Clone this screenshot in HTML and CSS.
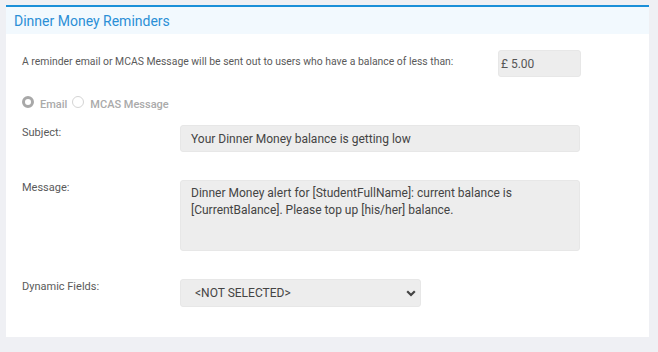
FILE: index.html
```html
<!DOCTYPE html>
<html>
<head>
<meta charset="utf-8">
<link rel="stylesheet" href="styles.css">
</head>
<body>
<div class="panel">
  <div class="panel-head">Dinner Money Reminders</div>
  <div class="panel-body">
    <div class="row-balance">
      <span class="text">A reminder email or MCAS Message will be sent out to users who have a balance of less than:</span>
      <div class="balance">£ 5.00</div>
    </div>
    <div class="radios">
      <span class="radio checked"></span><span class="radio-label">Email</span>
      <span class="radio"></span><span class="radio-label">MCAS Message</span>
    </div>
    <div class="form-grid">
      <div class="label">Subject:</div>
      <div class="field input">Your Dinner Money balance is getting low</div>
      <div class="label">Message:</div>
      <div class="field textarea">Dinner Money alert for [StudentFullName]: current balance is [CurrentBalance]. Please top up [his/her] balance.</div>
      <div class="label">Dynamic Fields:</div>
      <div class="select-wrap">
        <div class="field select">&lt;NOT SELECTED&gt;</div>
        <svg class="chevron" width="10" height="7" viewBox="0 0 10 7"><path d="M1.2 1.2 L5 5 L8.8 1.2" fill="none" stroke="#444" stroke-width="2.2"/></svg>
      </div>
    </div>
  </div>
</div>
</body>
</html>
```
FILE: styles.css
```css
html, body {
  margin: 0;
  padding: 0;
}
body {
  background: #eff0f4;
  font-family: Roboto, "Liberation Sans", sans-serif;
  width: 658px;
  height: 352px;
  overflow: hidden;
}
.panel {
  margin: 5px 0 0 6px;
  width: 643px;
  background: #fff;
  border-top: 2px solid #1b8fd8;
}
.panel-head {
  height: 27px;
  line-height: 28px;
  background: #f2f9fe;
  color: #2b8fd6;
  font-size: 14px;
  padding-left: 8px;
}
.panel-body {
  padding: 16px 69px 30px 16px;
}
.row-balance {
  display: flex;
  justify-content: space-between;
  align-items: flex-start;
}
.row-balance .text {
  font-size: 10.4px;
  color: #5a5a5a;
  padding-top: 5px;
}
.balance {
  width: 79px;
  height: 25px;
  line-height: 26px;
  background: #ededed;
  border: 1px solid #e7e7e7;
  border-radius: 3px;
  font-size: 12px;
  color: #555;
  padding-left: 2px;
  box-sizing: content-box;
  margin-right: -1px;
}
.radios {
  display: flex;
  align-items: center;
  margin-top: 18px;
  height: 14px;
}
.radio {
  width: 12px;
  height: 12px;
  border-radius: 50%;
  border: 1px solid #d4d4d4;
  box-sizing: border-box;
  background: #fff;
}
.radio.checked {
  border: 3.5px solid #a8a8a8;
}
.radio-label {
  font-size: 11px;
  font-weight: 500;
  color: #aaa;
  margin: 4px 5px 0 6px;
}
.form-grid {
  display: grid;
  grid-template-columns: 158px 400px;
  row-gap: 28px;
  margin-top: 16px;
}
.label {
  font-size: 11px;
  color: #5a5a5a;
  padding-top: 1px;
}
.field {
  background: #ededed;
  border: 1px solid #e7e7e7;
  border-radius: 3px;
  color: #444;
  font-size: 12px;
  box-sizing: border-box;
}
.input {
  height: 27px;
  line-height: 26px;
  padding-left: 10px;
}
.textarea {
  height: 71px;
  line-height: 16.5px;
  padding: 4px 10px;
}
.select-wrap {
  position: relative;
  width: 241px;
}
.select {
  height: 28px;
  line-height: 27px;
  padding-left: 14px;
}
.chevron {
  position: absolute;
  left: 226px;
  top: 11px;
}
```
